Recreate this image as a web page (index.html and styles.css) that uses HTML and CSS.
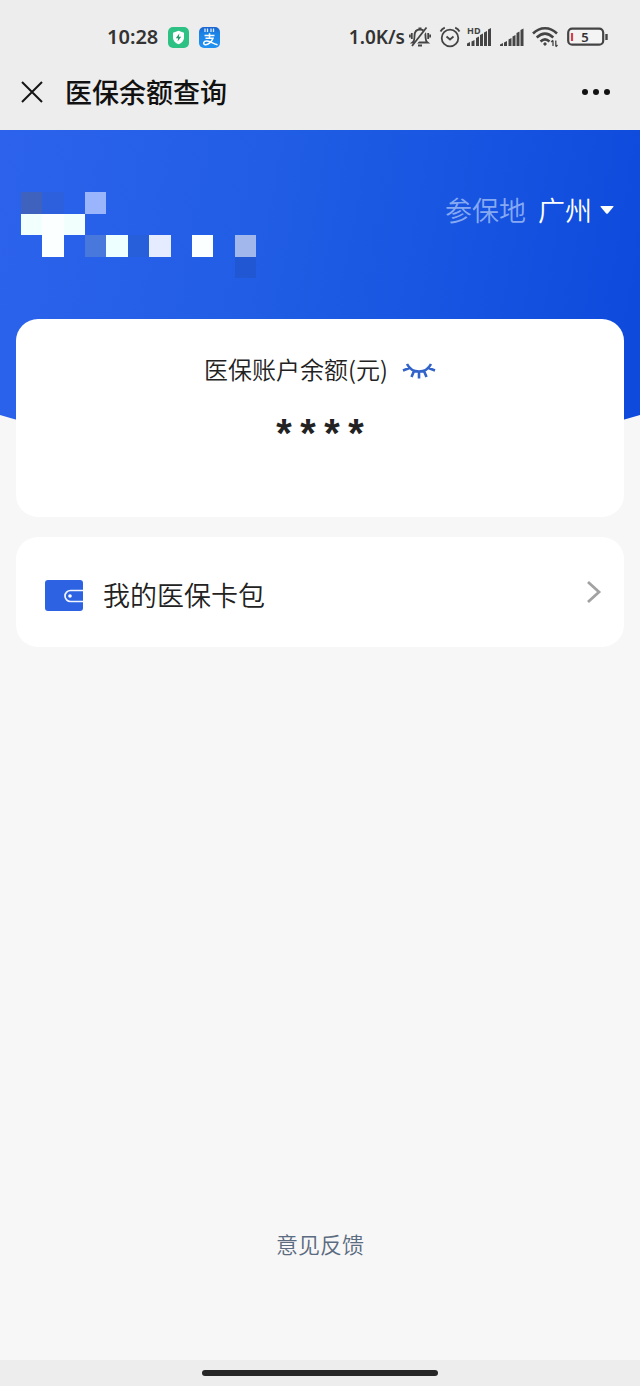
FILE: index.html
```html
<!DOCTYPE html>
<html lang="zh-CN">
<head>
<meta charset="utf-8">
<meta name="viewport" content="width=device-width, initial-scale=1">
<title>医保余额查询</title>
<link rel="stylesheet" href="styles.css">
</head>
<body>
<div class="status">
  <div class="status-left">
    <span>10:28</span>
    <svg width="21" height="21" viewBox="0 0 21 21" aria-hidden="true">
      <rect width="21" height="21" rx="5" fill="#2dc184"/>
      <path d="M10.500 3.800 L16 5.700 V10.500 C16 13.800 13.500 16 10.500 17.300 C7.500 16 5 13.800 5 10.500 V5.700 Z" fill="#fff"/>
      <path d="M11.300 6.500 L7.800 11.300 H10.100 L9.600 14.500 L13.200 9.700 H10.900 Z" fill="#219b69"/>
    </svg>
    <svg width="21" height="21" viewBox="0 0 21 21" aria-hidden="true">
      <defs><linearGradient id="pay" x1="0" y1="0" x2="0" y2="1"><stop offset="0" stop-color="#1b63ce"/><stop offset=".3" stop-color="#1c83e6"/><stop offset="1" stop-color="#2092f1"/></linearGradient></defs>
      <rect width="21" height="21" rx="5" fill="url(#pay)"/>
      <path d="M6 1.500V5 M8.500 1.500V5 M12 1.500V5 M14.500 1.500V5" stroke="#d8ebff" stroke-width="1.300"/>
      <path d="M5.500 8.500H15.500 M10.500 6.300V11 M6.500 11.300H14 C13 14.500 9 18.300 6.200 17.800 C3.500 17 4.500 13.700 8 14 C11.500 14.300 14 16.500 18.500 17.800" fill="none" stroke="#fff" stroke-width="1.500"/>
    </svg>
  </div>
  <div class="status-right">
    <span>1.0K/s</span>
    <svg width="22" height="22" viewBox="0 0 22 22" fill="none" stroke="#444" stroke-width="1.800" aria-hidden="true">
      <path d="M3.500 16.500 C5.500 15 5.500 13 5.500 10 C5.500 6 7.500 3.500 11 3.500 C14.500 3.500 16.500 6 16.500 10 C16.500 13 16.500 15 18.500 16.500 Z"/>
      <path d="M9 19.500H13 M9.500 2.500H12.500 M2.800 7V13 M.8 8.500V11.500 M19.200 7V13 M21.200 8.500V11.500"/>
      <path d="M4.500 20L18.500 1.500" stroke="#ededed" stroke-width="3"/>
      <path d="M3 20L17.500 1.500"/>
    </svg>
    <svg class="alarm" width="22" height="22" viewBox="0 0 22 22" fill="none" stroke="#444" stroke-width="1.800" aria-hidden="true">
      <circle cx="11" cy="12" r="8.300"/>
      <path d="M1.500 5.500 C2.500 3.500 3.800 2.500 5.800 1.700 M20.500 5.500 C19.500 3.500 18.200 2.500 16.200 1.700 M7.500 10.500L11 13.500L14.500 10.500"/>
    </svg>
    <svg width="26" height="22" viewBox="0 0 26 22" fill="#444" overflow="visible" aria-hidden="true">
      <text x="1" y="8" class="hd">HD</text>
      <path d="M1 20V17.500L4 16V20Z M5.500 20V15.500L8.500 14V20Z M10 20V12L13 10.500V20Z M14 20V9L17 7.500V20Z M18 20V6.500L21 5V20Z M22 20V3.500L25 2V20Z"/>
    </svg>
    <svg width="26" height="22" viewBox="0 0 26 22" fill="#444" aria-hidden="true">
      <path d="M1 20V18.500L4 17V20Z M5 20V16.500L8 15V20Z M9.500 20V13.500L12.500 12V20Z M13.500 20V10.500L16.500 9V20Z M17.500 20V7L20.500 5.500V20Z M21.500 20V4L24.500 2.500V20Z"/>
    </svg>
    <svg width="26" height="22" viewBox="0 0 26 22" fill="none" stroke="#444" stroke-width="2.500" aria-hidden="true">
      <path d="M1 7.500 C8 .5 18 .5 25 7.500 M4.700 11.500 C10 6.500 16 6.500 21.300 11.500 M8.500 15.500 C11.500 12.700 14.500 12.700 17.500 15.500"/>
      <circle cx="13" cy="18" r="1.200" fill="#444" stroke-width="1"/>
      <path d="M21 14.500V20 M19.200 16L21 14.300 M23.800 14.500V20.500 M25.500 19L23.800 20.700" stroke-width="1.300"/>
    </svg>
    <svg class="battery" width="41" height="20" viewBox="0 0 41 20" aria-hidden="true">
      <rect x="1.200" y="1.700" width="35" height="16" rx="4" fill="#f4f4f4" stroke="#444" stroke-width="2.200"/>
      <path d="M39.500 7V13" stroke="#444" stroke-width="2.400"/>
      <path d="M5 6V14" stroke="#d0434b" stroke-width="2.200"/>
      <text x="18" y="14.500" text-anchor="middle" class="charge">5</text>
    </svg>
  </div>
</div>
<header class="nav">
  <button class="icon-btn" type="button" aria-label="关闭">
    <svg width="24" height="24" viewBox="0 0 24 24" fill="none" stroke="#151515" stroke-width="2"><path d="M2 2L22 22M22 2L2 22"/></svg>
  </button>
  <h1 class="nav-title">医保余额查询</h1>
  <button class="icon-btn" type="button" aria-label="更多">
    <svg width="30" height="8" viewBox="0 0 30 8" fill="#111"><circle cx="4" cy="4" r="3"/><circle cx="15" cy="4" r="3"/><circle cx="26" cy="4" r="3"/></svg>
  </button>
</header>
<main class="page">
  <section class="hero">
    <div class="profile">
      <svg class="mosaic" width="235" height="86" viewBox="0 0 11 4" preserveAspectRatio="none" shape-rendering="crispEdges" aria-hidden="true">
        <path d="M0 0h1v1H0z" fill="#3e62bd"/>
        <path d="M1 0h1v1H1z" fill="#2c60dc"/>
        <path d="M3 0h1v1H3z" fill="#9ab5fb"/>
        <path d="M0 1h3v1H0z" fill="#f1fffd"/>
        <path d="M1 1h1v2H1z M8 2h1v1H8z" fill="#fcffff"/>
        <path d="M3 2h1v1H3z" fill="#4878dc"/>
        <path d="M4 2h1v1H4z" fill="#edffff"/>
        <path d="M5 2h1v1H5z" fill="#265fd9"/>
        <path d="M6 2h1v1H6z" fill="#e6ecff"/>
        <path d="M10 2h1v1h-1z" fill="#a2b8ed"/>
        <path d="M10 3h1v1h-1z" fill="#2257d3"/>
      </svg>
      <div class="region">
        <label class="region-label" for="city">参保地</label>
        <select class="region-select" id="city"><option>广州</option></select>
        <svg width="14" height="8" viewBox="0 0 14 8" fill="#fff" aria-hidden="true"><path d="M1 0H13Q14 0 13.300 .9L7.800 7.400Q7 8 6.200 7.400L.7 .9Q0 0 1 0Z"/></svg>
      </div>
    </div>
    <div class="card balance">
      <div class="balance-head">
        <h2 class="balance-title">医保账户余额(元)</h2>
        <button class="icon-btn" type="button" aria-label="显示余额">
          <svg width="34" height="20" viewBox="0 0 34 20" fill="none" stroke="#3163c9" stroke-width="2.600"><path d="M5 5C10 15 24 15 29 5M1 11.500L7.500 9M33 11.500L26.500 9M12 12L9.500 18M17 13V19.500M22 12L24.500 18"/></svg>
        </button>
      </div>
      <p class="amount">****</p>
    </div>
  </section>
  <a class="card wallet" href="#cards">
    <svg width="38" height="31" viewBox="0 0 38 31" aria-hidden="true">
      <rect width="38" height="31" rx="3" fill="#2d62e3"/>
      <path d="M38 10.500H25.500A5.500 5.500 0 0 0 25.500 21.500H38" fill="none" stroke="#f2f6ff" stroke-width="1.700"/>
      <circle cx="25" cy="16" r="1.800" fill="#fff"/>
    </svg>
    <span class="wallet-text">我的医保卡包</span>
    <svg class="chevron" width="16" height="24" viewBox="0 0 16 24" fill="none" stroke="#a2a2a2" stroke-width="2.800" aria-hidden="true"><path d="M2 2L13 12L2 22"/></svg>
  </a>
  <a class="feedback" href="#feedback">意见反馈</a>
</main>
<footer class="home"><div class="home-bar"></div></footer>
</body>
</html>
```
FILE: styles.css
```css
* { box-sizing: border-box; }
body {
  margin: 0;
  min-height: 100vh;
  display: flex;
  flex-direction: column;
  background: #f7f7f7;
  color: #222;
  font-family: "Noto Sans CJK SC", sans-serif;
  font-weight: 350;
}
h1, h2, p { margin: 0; font-weight: inherit; }
svg { display: block; flex: none; }
a { color: inherit; text-decoration: none; }
.icon-btn {
  display: flex;
  padding: 0;
  border: 0;
  background: none;
}
.status {
  display: flex;
  justify-content: space-between;
  align-items: center;
  height: 56px;
  padding: 18px 32px 0 107px;
  background: #ededed;
  color: #333;
  font: 600 20px/28px "Noto Sans", sans-serif;
}
.status-left { display: flex; align-items: center; gap: 10px; }
.status-right { display: flex; align-items: center; gap: 7px; font-size: 19px; }
.status-right > span { margin-right: -3px; }
.alarm { margin: 0 -2px 0 1px; }
.battery { margin-left: 2px; }
.hd { font: 700 9px "Noto Sans", sans-serif; }
.charge { font: 600 13px "Noto Sans", sans-serif; fill: #333; }
.nav {
  display: flex;
  align-items: center;
  height: 74px;
  padding: 0 29px 2px 20px;
  background: #ededed;
}
.nav-title {
  flex: 1;
  margin-left: 21px;
  color: #111;
  font-size: 27px;
  font-weight: 500;
  line-height: 40px;
}
.page {
  flex: 1;
  display: flex;
  flex-direction: column;
}
.hero {
  position: relative;
  padding: 0 16px;
}
.hero::before {
  content: "";
  position: absolute;
  inset: 0;
  background: linear-gradient(100deg, #2d63ec, #1f5ce4 45%, #0c49dc);
  clip-path: ellipse(100% 329px at 50% 0);
}
.profile {
  position: relative;
  display: flex;
  justify-content: space-between;
  align-items: flex-start;
  height: 189px;
  padding: 60px 10px 0 5px;
}
.mosaic { margin-top: 2px; }
.region {
  display: flex;
  align-items: center;
  color: #fff;
  font-size: 27px;
  line-height: 40px;
}
.region-label { color: #86a9f2; }
.region-select {
  appearance: none;
  margin: 0 8px 0 12px;
  padding: 0;
  border: 0;
  background: none;
  color: inherit;
  font: inherit;
}
.card {
  border-radius: 22px;
  background: #fff;
}
.balance {
  position: relative;
  height: 198px;
  padding-top: 32px;
}
.balance-head {
  display: flex;
  justify-content: center;
  align-items: center;
  gap: 14px;
}
.balance-title { font-size: 24px; line-height: 36px; }
.amount {
  margin-top: 28px;
  text-align: center;
  font: 700 40px/48px "Liberation Mono", monospace;
}
.wallet {
  display: flex;
  align-items: center;
  gap: 20px;
  margin: 20px 16px 0;
  padding: 38px 22px 32px 29px;
}
.wallet-text { flex: 1; font-size: 27px; line-height: 40px; }
.chevron { margin-bottom: 6px; }
.feedback {
  align-self: center;
  margin: auto 0 101px;
  color: #5b6b80;
  font-size: 22px;
  line-height: 32px;
}
.home {
  display: flex;
  justify-content: center;
  padding: 10px 0;
  background: #ededed;
}
.home-bar {
  width: 37%;
  height: 6px;
  border-radius: 3px;
  background: #262626;
}
```
